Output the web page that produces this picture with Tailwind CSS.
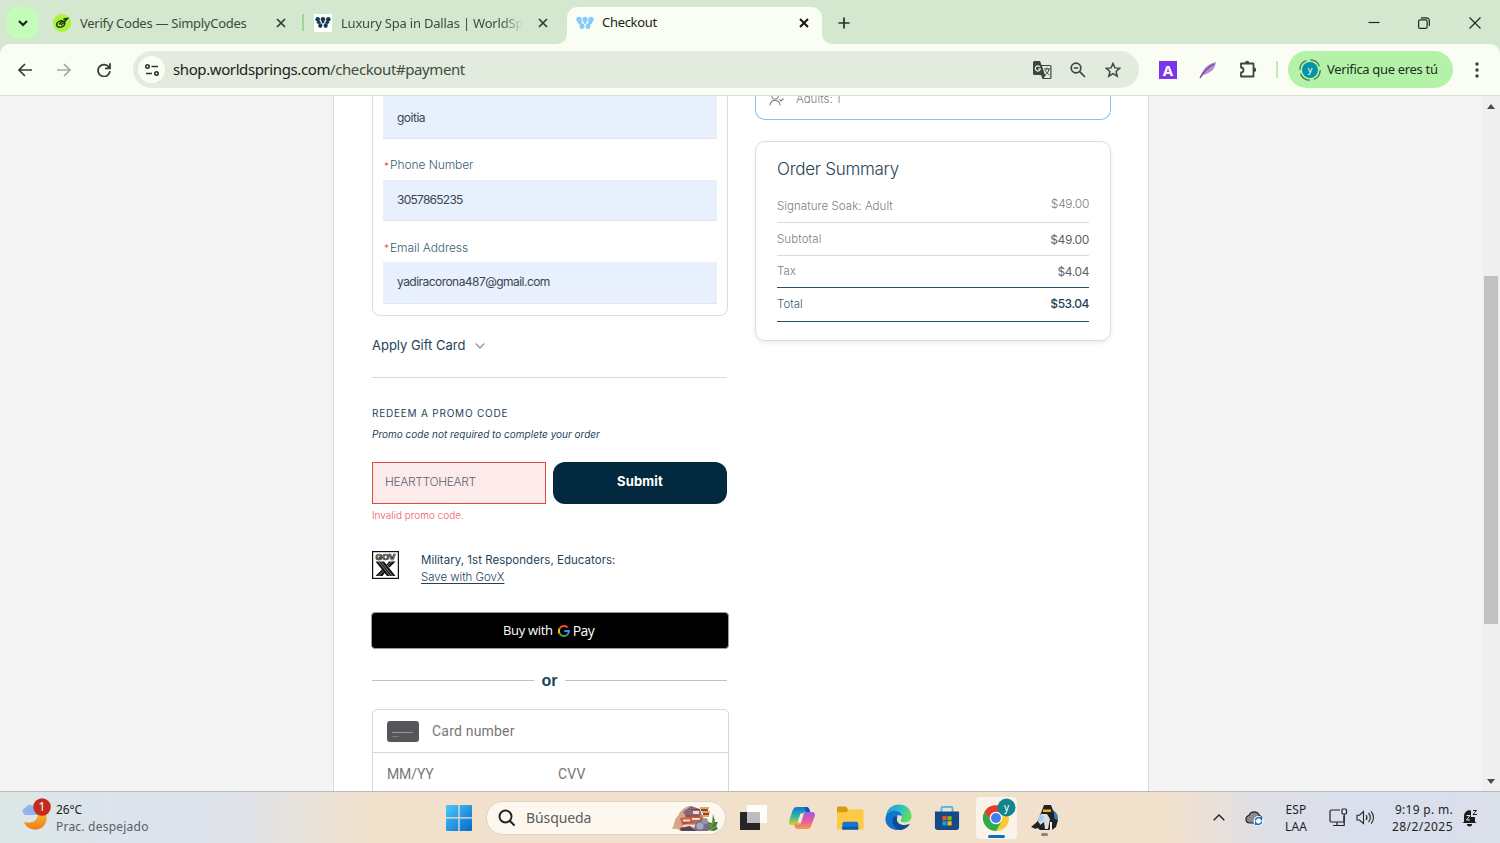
<!DOCTYPE html>
<html lang="es">
<head>
    <meta charset="UTF-8">
    <meta name="viewport" content="width=device-width, initial-scale=1.0">
    <title>Checkout</title>
    <script src="https://cdn.jsdelivr.net/npm/@tailwindcss/browser@4"></script>
</head>
<body class="w-[1500px] h-[843px] overflow-hidden flex flex-col bg-[#d3e8cf] font-['Noto_Sans',sans-serif]">

    <!-- Tab strip -->
    <div class="h-11 shrink-0 flex relative text-[13px] text-[#3d4b3c]">
        <div class="ml-[7px] mt-[7px] w-[31px] h-[31px] rounded-[10px] bg-[#c3fdba] flex items-center justify-center">
            <svg class="w-3 h-3" viewBox="0 0 12 12" fill="none" stroke="#10200f" stroke-width="2"><path d="M2 4l4 4 4-4"/></svg>
        </div>
        <div class="ml-[15px] w-[249px] h-[46px] flex items-center">
            <svg class="w-[18px] h-[18px]" viewBox="0 0 18 18"><circle cx="9" cy="9" r="9" fill="#a8f33d"/><g fill="none" stroke="#1d3511" stroke-width="1.5"><ellipse cx="7.7" cy="10" rx="4.2" ry="3.1" transform="rotate(-20 7.7 10)"/><path d="M6 10.5l3-3 2 .6 3.500-3.600-4 .5M8 11l4-3.500"/></g></svg>
            <span class="ml-[9px] mt-px w-[190px] whitespace-nowrap tracking-[-0.28px]">Verify Codes — SimplyCodes</span>
            <svg class="ml-[6px] w-2.5 h-2.5" viewBox="0 0 10 10" stroke="#2f3d2e" stroke-width="1.7"><path d="M1 1l8 8M9 1L1 9"/></svg>
        </div>
        <div class="mt-[14px] w-0.5 h-[17px] bg-[#9bd892]"></div>
        <div class="ml-[10px] w-[252px] h-[46px] flex items-center">
            <svg class="w-[18px] h-[18px]" viewBox="0 0 18 18"><path fill="#fff" d="M0 0h18v18H0z"/><g fill="#173b50"><circle cx="3.700" cy="5.200" r="2.300"/><circle cx="9" cy="5.200" r="2.300"/><circle cx="14.300" cy="5.200" r="2.300"/><ellipse cx="4.700" cy="8.300" rx="1.900" ry="1.600"/><ellipse cx="13.300" cy="8.300" rx="1.900" ry="1.600"/><ellipse cx="9" cy="8" rx="1.400" ry="1.400"/><ellipse cx="6.300" cy="11.600" rx="2.100" ry="2.400"/><ellipse cx="11.700" cy="11.600" rx="2.100" ry="2.400"/></g></svg>
            <span class="ml-[9px] mt-px w-[182px] overflow-hidden whitespace-nowrap tracking-[-0.2px] [mask-image:linear-gradient(to_right,#000_88%,transparent)]">Luxury Spa in Dallas | WorldSprings</span>
            <svg class="ml-[15px] w-2.5 h-2.5" viewBox="0 0 10 10" stroke="#2f3d2e" stroke-width="1.7"><path d="M1 1l8 8M9 1L1 9"/></svg>
        </div>
        <div class="ml-px mt-[7px] w-[255px] h-[37px] bg-[#f9fdf3] rounded-t-[10px] flex items-center pb-[6px] pl-[9px] text-[#1a211a] relative">
            <svg class="absolute -left-[10px] bottom-0 w-[10px] h-[10px]" viewBox="0 0 10 10"><path d="M10 0v10H0A10 10 0 0 0 10 0z" fill="#f9fdf3"/></svg>
            <svg class="absolute -right-[10px] bottom-0 w-[10px] h-[10px]" viewBox="0 0 10 10"><path d="M0 0v10h10A10 10 0 0 1 0 0z" fill="#f9fdf3"/></svg>
            <svg class="w-[18px] h-[18px]" viewBox="0 0 18 18" fill="#87c9fb"><circle cx="3" cy="5.400" r="2.700"/><circle cx="9" cy="5.400" r="2.600"/><circle cx="15" cy="5.400" r="2.700"/><ellipse cx="4" cy="8.600" rx="2.100" ry="1.900"/><ellipse cx="14" cy="8.600" rx="2.100" ry="1.900"/><ellipse cx="9" cy="8.300" rx="1.400" ry="1.600"/><ellipse cx="6" cy="12.300" rx="2.400" ry="2.700"/><ellipse cx="12" cy="12.300" rx="2.400" ry="2.700"/></svg>
            <span class="ml-2 mt-px w-[190px] tracking-[-0.3px]">Checkout</span>
            <svg class="ml-[7px] w-2.5 h-2.5" viewBox="0 0 10 10" stroke="#111" stroke-width="1.9"><path d="M1 1l8 8M9 1L1 9"/></svg>
        </div>
        <svg class="ml-4 mt-[17px] w-3 h-3" viewBox="0 0 12 12" stroke="#243323" stroke-width="1.7"><path d="M6 .5v11M.5 6h11"/></svg>
        <div class="ml-auto mt-[17px] mr-[19px] flex text-[#20281f]">
            <svg class="w-3 h-3 mr-[38px]" viewBox="0 0 12 12" stroke="currentColor" stroke-width="1.2"><path d="M.5 5.500h11"/></svg>
            <svg class="w-3 h-3 mr-[39px]" viewBox="0 0 12 12" fill="none" stroke="currentColor" stroke-width="1.2"><rect x=".6" y="2.900" width="8.500" height="8.500" rx="1.500"/><path d="M3 .8h5.500a2.800 2.800 0 0 1 2.800 2.800V9"/></svg>
            <svg class="w-3 h-3" viewBox="0 0 12 12" stroke="currentColor" stroke-width="1.2"><path d="M.5.5l11 11M11.500.5l-11 11"/></svg>
        </div>
    </div>

    <!-- Toolbar -->
    <div class="h-[52px] shrink-0 bg-[#f9fdf3] rounded-t-[10px] border-b border-[#dde2d6] flex items-center">
        <svg class="ml-[18px] w-[14px] h-[14px]" viewBox="0 0 14 14" fill="none" stroke="#354135" stroke-width="1.7"><path d="M14 7H1.500M7 1L1 7l6 6"/></svg>
        <svg class="ml-[25px] w-[14px] h-[14px]" viewBox="0 0 14 14" fill="none" stroke="#a5aba2" stroke-width="1.7"><path d="M0 7h12.500M7 1l6 6-6 6"/></svg>
        <svg class="ml-[26px] w-[14px] h-[14px]" viewBox="0 0 14 14" fill="none" stroke="#354135" stroke-width="1.8"><path d="M12.200 4.500A6 6 0 1 0 13 8.200M13 .3v5H8"/></svg>
        <div class="ml-[22px] w-[1006px] h-[37px] rounded-full bg-[#e3ebde] flex items-center">
            <div class="ml-[5px] w-[27px] h-[27px] rounded-full bg-[#f9fdf3] flex items-center justify-center">
                <svg class="w-[14px] h-[14px]" viewBox="0 0 14 14" fill="none" stroke="#2c362b" stroke-width="1.6"><circle cx="2.500" cy="3.500" r="1.700"/><path d="M6.500 3.500H13M1 10.500h6"/><circle cx="11.500" cy="10.500" r="1.700"/></svg>
            </div>
            <div class="ml-2 -mt-px text-[15px] text-[#414d40] tracking-[-0.4px] leading-5"><span class="text-[#1b221a]">shop.worldsprings.com</span>/checkout#payment</div>
            <svg class="ml-auto w-[19px] h-[18px]" viewBox="0 0 19 18"><path fill="#3d473c" d="M1 0h6l1.500 4H17a1.500 1.500 0 0 1 1.500 1.500v11A1.500 1.500 0 0 1 17 18H9.500L8 14H1.500A1.500 1.500 0 0 1 0 12.500V1z"/><path fill="#e3ebde" d="M9 5h8.300v12h-6.500l2-3H12z"/><path d="M7 6a2.600 2.600 0 1 0 .4 2H5" fill="none" stroke="#fff" stroke-width="1.1"/><path d="M11 8h6M14 6.500V8M12 9c1 2 3 4 4.500 5M16 8c-.5 3-2 4.500-4 6" fill="none" stroke="#3d473c"/></svg>
            <svg class="ml-[18px] w-4 h-4" viewBox="0 0 16 16" fill="none" stroke="#3d473c" stroke-width="1.7"><circle cx="6" cy="6" r="4.800"/><path d="M9.700 9.700l5.300 5.300M3.800 6h4.400"/></svg>
            <svg class="ml-[19px] mr-[18px] w-4 h-4" viewBox="0 0 16 16" fill="none" stroke="#3d473c" stroke-width="1.5"><path d="M8 1.500l1.900 4.400 4.900.4-3.700 3.200 1.100 4.700L8 11.700l-4.200 2.500 1.100-4.700L1.200 6.300l4.900-.4z"/></svg>
        </div>
        <div class="ml-5 w-[18px] h-[18px] bg-[#7b35ea] text-white font-bold text-[15px] leading-[18px] text-center">A</div>
        <svg class="ml-[22px] w-[18px] h-[18px]" viewBox="0 0 18 18"><path d="M1 17C3 9 8 3 17 1c-1 7-5 11-13 13z" fill="#b58bd4"/><path d="M1 17C5 10 9 6 15 3" stroke="#713f9c" fill="none" stroke-width="1.3"/></svg>
        <svg class="ml-[22px] w-[19px] h-[19px]" viewBox="0 0 19 19"><path d="M2 3.500h12.500v13H2v-4a2.500 2.500 0 0 0 0-5z" fill="none" stroke="#3d473c" stroke-width="1.8" stroke-linejoin="round"/><path fill="#3d473c" d="M6 3a2.200 2.200 0 0 1 4.400 0zM15 7.500a2.200 2.200 0 0 1 0 4.400z"/></svg>
        <div class="ml-[18px] w-0.5 h-[17px] bg-[#bdecb5]"></div>
        <div class="ml-[10px] w-[165px] h-[37px] rounded-full bg-[#b4f2aa] flex items-center text-[#1c3119] text-[13px]">
            <svg class="ml-[11px] w-[22px] h-[22px]" viewBox="0 0 22 22"><circle cx="11" cy="11" r="10.200" fill="none" stroke="#49724a" stroke-width="1.3" stroke-dasharray="12 4"/><circle cx="11" cy="11" r="8" fill="#0694a5"/><text x="11" y="14" fill="#fff" font-size="9" text-anchor="middle">y</text></svg>
            <span class="ml-[6px] tracking-[-0.33px] whitespace-nowrap">Verifica que eres tú</span>
        </div>
        <svg class="ml-[22px] w-1 h-4" viewBox="0 0 4 16" fill="#354135"><circle cx="2" cy="2" r="1.700"/><circle cx="2" cy="8" r="1.700"/><circle cx="2" cy="14" r="1.700"/></svg>
    </div>

    <!-- Page -->
    <div class="h-[695px] shrink-0 flex bg-[#f4f4f5] overflow-hidden font-[Inter,'Liberation_Sans',sans-serif] text-[#1f4358]">
        <div class="ml-[333px] w-[816px] bg-white border-x border-[#d6d8da] flex pl-[37px]">

            <!-- Guest form and payment -->
            <div class="w-[357px]">
                <div class="ml-px w-[356px] h-[220px] border border-t-0 border-[#dcdddf] rounded-b-lg px-[10px] text-[12px] font-light">
                    <div class="h-[43px] bg-[#e8effd] border-b border-[#dfe5f1] px-[14px] leading-[43px] text-[#3a4650] font-normal tracking-[-0.5px]">goitia</div>
                    <div class="h-[41px] pl-px pt-[6px] flex text-[#3b6070]"><span class="w-[6px] text-[10px] leading-[42px] h-[35px] text-red-500">*</span><span class="leading-[41px] h-[35px] tracking-[-0.08px] -mt-px">Phone Number</span></div>
                    <div class="h-[41px] bg-[#e8effd] border-b border-[#dfe5f1] px-[14px] leading-[39px] text-[#3a4650] font-normal tracking-[-0.75px]">3057865235</div>
                    <div class="h-[41px] pl-px pt-[6px] flex text-[#3b6070]"><span class="w-[6px] text-[10px] leading-[42px] h-[35px] text-red-500">*</span><span class="leading-[41px] h-[35px] tracking-[-0.08px]">Email Address</span></div>
                    <div class="h-[42px] bg-[#e8effd] border-b border-[#dfe5f1] px-[14px] leading-[39px] text-[#3a4650] font-normal tracking-[-0.54px]">yadiracorona487@gmail.com</div>
                </div>

                <div class="ml-px w-[355px]">
                    <div class="h-[62px] pb-px border-b border-[#d9dadc] flex items-center text-[13px]">
                        <span class="-tracking-[0.02px]">Apply Gift Card</span>
                        <svg class="ml-[10px] w-[10px] h-[10px]" viewBox="0 0 10 10" fill="none" stroke="#8b979d" stroke-width="1.2"><path d="M.8 2.500L5 7l4.200-4.500"/></svg>
                    </div>
                    <div class="mt-6 h-[22px] leading-[22px] text-[10px] tracking-[0.78px]">REDEEM A PROMO CODE</div>
                    <div class="h-[22px] leading-[21px] text-[10px] italic">Promo code not required to complete your order</div>
                    <div class="mt-4 flex gap-[7px] h-[42px]">
                        <div class="w-[174px] border border-[#e0493f] bg-[#fdeaea] pl-3 leading-[38px] text-[12px] font-light tracking-[-0.35px] text-[#5b6670]">HEARTTOHEART</div>
                        <div class="w-[174px] rounded-[12px] bg-[#02293d] text-white text-[13px] font-bold leading-[39px] tracking-[0.15px] text-center">Submit</div>
                    </div>
                    <div class="h-5 leading-[22px] text-[10px] font-light text-[#f0545e]">Invalid promo code.</div>

                    <div class="mt-[27px] flex">
                        <svg class="w-[27px] h-[28px]" viewBox="0 0 27 28"><rect x=".6" y=".6" width="25.800" height="26.800" fill="#fff" stroke="#111" stroke-width="1.2"/><text x="13.500" y="8.800" text-anchor="middle" font-size="7.500" font-weight="700" textLength="20" lengthAdjust="spacingAndGlyphs" fill="#fff" stroke="#111" stroke-width=".7">GOV</text><path fill="#111" d="M3.500 10.500h8.500l11.500 14.500H15zM17 10.500h6.500l-6 6-3-2.800zM3.500 25l7-7 3 3-3 4z"/><path stroke="#fff" stroke-width=".5" d="M6.500 10.500l11.500 14.500M9 10.500l11.500 14.500M15 15l5-4.500M6.500 25l5-5"/></svg>
                        <div class="ml-[22px] text-[11.5px]">
                            <div class="leading-[18px] tracking-[0.03px]">Military, 1st Responders, Educators:</div>
                            <div class="leading-[17px] font-light tracking-[-0.05px] underline underline-offset-2">Save with GovX</div>
                        </div>
                    </div>
                </div>

                <div class="mt-[26px] w-[358px] h-[37px] rounded-[4px] bg-black border border-[#9a9a9a] text-white text-[13px] font-medium flex items-center justify-center font-['Open_Sans',sans-serif]">
                    <span class="-ml-[3px] tracking-[-0.3px]">Buy with</span>
                    <svg class="ml-[5px] mr-[3px] w-3 h-3" viewBox="0 0 12 12" fill="none" stroke-width="2"><path stroke="#ea4335" d="M1.600 3.500A5 5 0 0 1 9.600 2.500"/><path stroke="#fbbc04" d="M1.600 8.500a5 5 0 0 1 0-5"/><path stroke="#34a853" d="M9.400 9.600a5 5 0 0 1-7.800-1.100"/><path stroke="#4285f4" d="M6.200 6H11a5 5 0 0 1-1.600 3.600"/></svg>
                    <span class="font-normal text-[14px] tracking-[-0.6px]">Pay</span>
                </div>

                <div class="ml-px mt-[18px] h-[27px] w-[355px] flex items-center">
                    <div class="flex-1 h-px bg-[#bfc3c5]"></div>
                    <span class="w-[31px] text-center text-[16px] font-bold font-['Liberation_Sans',sans-serif]">or</span>
                    <div class="flex-1 h-px bg-[#bfc3c5]"></div>
                </div>

                <div class="ml-px mt-[15px] w-[357px] h-[100px] border border-[#d6d7d9] rounded-t-[5px] font-[Roboto,sans-serif] text-[14px] tracking-[0.2px] text-[#777]">
                    <div class="h-[43px] border-b border-[#d6d7d9] flex items-center pl-[14px]">
                        <svg class="w-8 h-[21px]" viewBox="0 0 32 21"><rect width="32" height="21" rx="3" fill="#545659"/><path stroke="#96989a" d="M5 11.500h21"/><path stroke="#77797b" d="M5 15.500h7"/></svg>
                        <span class="ml-[13px]">Card number</span>
                    </div>
                    <div class="h-[43px] flex items-center pl-[14px]">
                        <span class="w-[171px] tracking-[-0.1px]">MM/YY</span>
                        <span>CVV</span>
                    </div>
                </div>
            </div>

            <!-- Order column -->
            <div class="ml-[27px] w-[356px] font-light text-[11.5px] text-[#7c8083]">
                <div class="h-6 border border-t-0 border-[#86c2ec] rounded-b-[10px] flex pl-[13px]">
                    <!-- guests row scrolled half under the toolbar -->
                    <svg class="-mt-[5px] w-[15px] h-[15px]" viewBox="0 0 15 15" fill="none" stroke="#7c8083" stroke-width="1.1"><circle cx="6" cy="5" r="3.200"/><path d="M.8 14.500c.5-3.500 2.500-5 5.200-5s4.700 1.500 5.200 5M10.500 8.500l1.500 1.500 2.500-2.500"/></svg>
                    <span class="ml-3 -mt-[5px] leading-[17px]">Adults: 1</span>
                </div>
                <div class="mt-[21px] h-[200px] border border-[#dcdddf] rounded-[10px] shadow-[0_2px_4px_rgba(0,0,0,0.08)] px-[21px]">
                    <div class="h-[47px] pt-[14px] leading-[26px] text-[17px] tracking-[-0.26px] text-[#1f4358]">Order Summary</div>
                    <div class="h-[34px] border-b border-[#d8dcdc] flex justify-between leading-[34px]"><span class="tracking-[0.05px]">Signature Soak: Adult</span><span class="leading-[29px] text-[12px] tracking-[-0.3px]">$49.00</span></div>
                    <div class="h-[33px] border-b border-[#d8dcdc] flex justify-between leading-[33px]"><span class="tracking-[0.1px]">Subtotal</span><span class="text-[12px] tracking-[-0.35px] font-normal text-[#5c6468]">$49.00</span></div>
                    <div class="h-8 border-b border-[#2b5064] flex justify-between leading-[31px]"><span>Tax</span><span class="text-[12px] tracking-[-0.4px] font-normal text-[#5c6468]">$4.04</span></div>
                    <div class="h-[34px] border-b border-[#2b5064] flex justify-between leading-[32px] text-[#3b6070]"><span>Total</span><span class="text-[12px] tracking-[-0.45px] font-medium text-[#1f4358]">$53.04</span></div>
                </div>
            </div>
        </div>

        <!-- Scrollbar -->
        <div class="ml-auto w-[18px] bg-[#efefef] flex flex-col items-center">
            <svg class="mt-2 w-2 h-[5px]" viewBox="0 0 8 5"><path fill="#4a4a4a" d="M0 5l4-5 4 5z"/></svg>
            <div class="mt-[167px] w-[14px] h-[348px] bg-[#c1c1c1]"></div>
            <svg class="mt-auto mb-[7px] w-2 h-[5px]" viewBox="0 0 8 5"><path fill="#4a4a4a" d="M0 0h8L4 5z"/></svg>
        </div>
    </div>

    <!-- Taskbar -->
    <div class="h-[52px] shrink-0 border-t border-[#b9b9b5] flex items-center bg-[linear-gradient(90deg,#dce7e6_0,#dce3ed_130px,#dfe2e9_240px,#f1e1cd_370px,#f1e1cb_800px,#f1e1cd_1170px,#dfdfe6_1260px,#d9dfec_1350px,#dadfea_1500px)] text-[12px] text-[#1f1f1f]">
        <div class="ml-[21px] w-[425px] flex">
            <svg class="w-[31px] h-[32px] -mt-[3px]" viewBox="0 0 31 32"><defs><linearGradient id="moon" x2="0" y2="1"><stop stop-color="#f5b82e"/><stop offset="1" stop-color="#ed7c1c"/></linearGradient></defs><path fill="url(#moon)" d="M25 16a11.500 11.500 0 1 1-22 8c8 2 14-1 14-9z"/><path fill="#8fb5f0" d="M4 17a4 4 0 0 1 .5-7.500 5 5 0 0 1 9 0L17 17z"/><circle cx="21" cy="9" r="8.800" fill="#c42b1c"/><text x="21" y="13.200" fill="#fff" font-size="12" text-anchor="middle">1</text></svg>
            <div class="ml-1 leading-[17px]">
                <div class="tracking-[-0.1px]">26°C</div>
                <div class="text-[#5a5f63] whitespace-nowrap tracking-[0.22px]">Prac. despejado</div>
            </div>
        </div>
        <svg class="w-[26px] h-[26px]" viewBox="0 0 26 26"><defs><linearGradient id="win" x2="1" y2="1"><stop stop-color="#4cc9fb"/><stop offset="1" stop-color="#0668c9"/></linearGradient></defs><path fill="url(#win)" d="M0 1a1 1 0 0 1 1-1h11.300v12.300H0zM13.600 0H25a1 1 0 0 1 1 1v11.300H13.600zM0 13.600h12.300V26H1a1 1 0 0 1-1-1zM13.600 13.600H26V25a1 1 0 0 1-1 1H13.600z"/></svg>
        <div class="ml-[14px] w-[240px] h-[34px] rounded-full bg-[#fcf8f0] border border-[#e2d3bf] flex items-center">
            <svg class="ml-[11px] w-[17px] h-[17px]" viewBox="0 0 17 17" fill="none" stroke="#222" stroke-width="1.9"><circle cx="7.500" cy="7.500" r="6"/><path d="M12 12l4 4" stroke-linecap="round"/></svg>
            <span class="ml-[11px] text-[14px] text-[#5d5b58] tracking-[-0.1px]">Búsqueda</span>
            <!-- gingerbread village -->
            <svg class="ml-auto mr-[6px] w-[47px] h-7" viewBox="0 0 47 28"><path fill="#d9a487" d="M0 25C3 20 2 15 6 12c2-5 6-9 12-10l8 4 8 12-6 8-20 1c-2-3-5-2-8-2z"/><path fill="#86677b" d="M11 8l8-6 9 3 2 7-14 3z"/><path fill="#c5634c" d="M8 14l22-3 2 5-22 5z"/><path fill="#f3dcc4" d="M11 15.500h7v2h-7zM20 14h8v2h-8zM21 7h6v3h-6zM11 21h12v2H11z"/><path stroke="#a83a2b" stroke-width="1.2" d="M13 12h15M19 5.500h9M11 19h19"/><path stroke="#c99336" stroke-width="1.5" d="M28 4h9M30 8h8M28 12h9"/><path fill="#a03a35" d="M29 5h7v2h-7zM31 9h6v2h-6z"/><path fill="#77708b" d="M23 22c1-8 12-10 15-1l-2 6H21z"/><circle cx="28" cy="22" r="3.600" fill="#aba6b4"/><circle cx="33" cy="17" r="3" fill="#9b93a8"/><path fill="#574357" d="M8 24l10-2 6 5H9z"/><path fill="#467d3a" d="M35 26l3-5-2-3 4 1 1-9 2 8 3 0-2 4 2 3-4 2z"/><path stroke="#7ca04d" stroke-width="1.2" d="M38 24l5-9M37 26l8-4"/></svg>
        </div>
        <div class="ml-[14px] flex items-center">
            <svg class="w-[27px] h-[26px]" viewBox="0 0 27 26"><path fill="#262626" d="M0 7h20v18H0z"/><path fill="#fff" fill-opacity=".92" d="M7 0h20v18H7z"/><path fill="#bdbdbd" d="M7 7h13v11H7z"/></svg>
            <svg class="ml-[22px] w-[26px] h-[26px]" viewBox="0 0 26 26"><defs><linearGradient id="cpA" x2="0" y2="1"><stop stop-color="#1677d2"/><stop offset=".5" stop-color="#2db4a2"/><stop offset="1" stop-color="#e8c92b"/></linearGradient><linearGradient id="cpB" x2="0" y2="1"><stop stop-color="#9e5ce8"/><stop offset=".5" stop-color="#e55aa0"/><stop offset="1" stop-color="#f69a4c"/></linearGradient></defs><path fill="url(#cpA)" d="M8 2h9c2 0 3 1 3.500 3l.7 2H17c-2 0-3 1-3.500 3l-2 7c-.5 2-1.500 3-3.500 3H3c-3 0-3.500-2-2.500-5l3-9.500C4.500 3 6 2 8 2z"/><path fill="url(#cpB)" d="M18 24H9c-2 0-3-1-3.500-3l-.3-1.500H9c2 0 3-1 3.500-3l2-7C15 7.500 16 7 18 7h5c3 0 3.500 2 2.500 5l-3 8c-1 3-2.500 4-4.500 4z"/><path fill="#1453b8" d="M15 2h2c2 0 3 1 3.500 3l.7 2H17z"/><path fill="#f6ead9" d="M11.500 8.500h3l-3 9h-3z"/></svg>
            <svg class="ml-[22px] w-[27px] h-[26px]" viewBox="0 0 28 26"><path fill="#d99a13" d="M0 2.500A1.500 1.500 0 0 1 1.500 1H9l2.500 3v4H0z"/><path fill="#fccb45" d="M0 7h10l2-3h14a1.500 1.500 0 0 1 1.500 1.500V25H0z"/><path fill="#1675cf" d="M5.500 25v-6a2 2 0 0 1 2-2H20a2 2 0 0 1 2 2v6z"/><path fill="#0d59a5" d="M5.500 22h16.500v3H5.500z"/></svg>
            <svg class="ml-[21px] w-[27px] h-[27px]" viewBox="0 0 28 27"><defs><linearGradient id="edA" x2="1" y2=".4"><stop stop-color="#1593de"/><stop offset=".6" stop-color="#2dc3c8"/><stop offset="1" stop-color="#5fdd5b"/></linearGradient></defs><path fill="url(#edA)" d="M1 12C2 4 8 0 14.500 0 22 0 27 5 27.500 11.500c.3 4-2.500 7-6.500 7-3.500 0-5.500-1-4.500-3 2.500-3 0-7-5-7C6 8.500 2.500 11 1 15z"/><path fill="#1474cc" d="M.5 14c.7-4 5-7.500 10-7.500 4 0 7 3 7 6-3-3-7-1-7 3.500 0 5 4.500 9 10 8.500C12 30-.7 24 .5 14z"/><path fill="#0c4b99" d="M8.500 13.500C6 18 9 26 17 26.500c4-1 7-3 9-6.500-4 2-12 2-13.500-3.500-.5-2 .2-3 1-4-2 0-4 0-5 1z"/></svg>
            <svg class="ml-[22px] w-[26px] h-[28px]" viewBox="0 0 28 28"><path fill="none" stroke="#42b9ea" stroke-width="2" d="M8 8V3.500A1.500 1.500 0 0 1 9.500 2h9A1.500 1.500 0 0 1 20 3.500V8"/><path fill="#154a86" d="M1 7h26v17a3 3 0 0 1-3 3H4a3 3 0 0 1-3-3z"/><path fill="#f35325" d="M9 12h4.500v4.500H9z"/><path fill="#81bc06" d="M14.500 12H19v4.500h-4.500z"/><path fill="#05a6f0" d="M9 17.500h4.500V22H9z"/><path fill="#ffba08" d="M14.500 17.500H19V22h-4.500z"/></svg>
            <div class="ml-4 w-[41px] h-[42px] rounded bg-[#f9f3ea] flex flex-col items-center">
                <svg class="w-[41px] h-[38px] shrink-0" viewBox="0 0 41 38"><circle cx="20" cy="21" r="13" fill="#fcc934"/><path fill="#e33b2e" d="M8.700 14.500L14.500 24.500 20 15h11.300A13 13 0 0 0 8.700 14.500z"/><path fill="#2da94f" d="M8.700 14.500A13 13 0 0 0 20 34l5.500-9.500-11 0z"/><circle cx="20" cy="21" r="6.300" fill="#fff"/><circle cx="20" cy="21" r="5" fill="#3f7df0"/><circle cx="30.500" cy="10.500" r="9" fill="#12868e"/><text x="30.500" y="13.500" fill="#fff" font-size="10" text-anchor="middle">y</text></svg>
                <div class="w-[17px] h-[3px] rounded-full bg-[#0f6cbd]"></div>
            </div>
            <svg class="ml-[14px] w-[28px] h-[36px] mt-1" viewBox="0 0 28 36"><circle cx="18.500" cy="16" r="8.500" fill="#2c83bd"/><path fill="#222" d="M10 11l3-8h7l3 8 1 13-6 4H9l-5-4 4-8z"/><path fill="#e9b52c" d="M12 7.500h8v2.500h-8z"/><path fill="#d9dde4" d="M10 12h6l3 5-2 10h-3l-1-7-4 3-2-4z"/><path fill="#a7cbea" d="M8 13l5 1-1 5-5 1z"/><path fill="#222" d="M0 25l6-5 3 2-4 5zM21 16l6 2-2 7-4 3z"/><path fill="#f2f2f2" d="M19 20h2v8h-2z"/><rect x="10" y="31" width="7" height="3" rx="1.500" fill="#8e8374"/></svg>
        </div>

        <!-- Tray -->
        <div class="ml-auto flex items-center mr-[22px]">
            <svg class="w-3 h-[7px]" viewBox="0 0 12 7" fill="none" stroke="#222" stroke-width="1.4"><path d="M.7 6.300L6 1l5.300 5.300"/></svg>
            <svg class="ml-5 w-[19px] h-[16px]" viewBox="0 0 19 16"><path fill="#8b8b8b" stroke="#222" stroke-width="1.2" d="M4.500 13A3.800 3.800 0 0 1 4 5.500a5.500 5.500 0 0 1 10.300 0A4 4 0 0 1 17 10v3z"/><circle cx="13.500" cy="11" r="5" fill="#fff"/><path fill="none" stroke="#176fc4" stroke-width="1.5" d="M10.300 10.500a3.300 3.300 0 0 1 6-1.500V7M16.700 11.500a3.300 3.300 0 0 1-6 1.500v2"/></svg>
            <div class="ml-5 w-6 text-center leading-[17px] tracking-[0.1px]"><div>ESP</div><div>LAA</div></div>
            <svg class="ml-[21px] w-[19px] h-[19px]" viewBox="0 0 19 19" fill="none" stroke="#252525" stroke-width="1.2"><path d="M11 2H2.500A1.500 1.500 0 0 0 1 3.500v9A1.500 1.500 0 0 0 2.500 14H15V8M8 14v3M4 17.500h9"/><rect x="13" y="1" width="4.500" height="5" rx="1"/><path d="M15.200 6v11.500h-3"/></svg>
            <svg class="ml-2 w-[19px] h-[15px]" viewBox="0 0 19 15" fill="none" stroke="#252525" stroke-width="1.1"><path d="M1 5.200h2.500L7.500 1.500v12L3.500 10H1zM10 5a4 4 0 0 1 0 5M12.500 3a6.500 6.500 0 0 1 0 9M15 1.300a9 9 0 0 1 0 12.400"/></svg>
            <div class="ml-4 w-[62px] text-right leading-[17px] whitespace-nowrap"><div class="tracking-[0.3px]">9:19 p. m.</div><div class="tracking-[0.45px]">28/2/2025</div></div>
            <svg class="ml-[9px] w-4 h-[18px]" viewBox="0 0 16 18"><path fill="#1c1c1c" d="M2 13V7a5.500 5.500 0 0 1 7-5.500V8h4v5l2 1H0zM5 15h5a2.500 2.500 0 0 1-5 0z"/><path fill="none" stroke="#1c1c1c" d="M11 1.500h3.500l-3.500 4h4"/><path fill="none" stroke="#fff" stroke-width=".9" d="M4.500 6.500H8l-3.500 4.500H8"/></svg>
        </div>
    </div>
</body>
</html>
